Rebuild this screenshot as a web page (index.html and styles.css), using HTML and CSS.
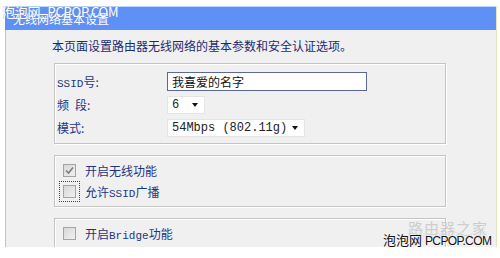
FILE: index.html
```html
<!DOCTYPE html>
<html lang="zh-CN">
<head>
    <meta charset="UTF-8">
    <title>无线网络基本设置</title>
    <link rel="stylesheet" href="styles.css">
</head>
<body>
    <div class="frame">
        <div class="titlebar">无线网络基本设置</div>
        <div class="content">
            <p class="intro">本页面设置路由器无线网络的基本参数和安全认证选项。</p>

            <div class="group">
                <div class="row">
                    <span class="label"><span class="lat">SSID</span>号:</span>
                    <span class="text-input">我喜爱的名字</span>
                </div>
                <div class="row">
                    <span class="label"><span class="spaced">频</span>段:</span>
                    <span class="select short"><span class="val">6</span><span class="arrow"></span></span>
                </div>
                <div class="row">
                    <span class="label">模式:</span>
                    <span class="select long"><span class="val">54Mbps (802.11g)</span><span class="arrow"></span></span>
                </div>
            </div>

            <div class="group checks">
                <div class="check-row">
                    <span class="box checked">
                        <svg width="9" height="9" viewBox="0 0 9 9"><path d="M1 4.5 L3.5 7 L8 1.5" fill="none" stroke="#7d7d7d" stroke-width="1.6"/></svg>
                    </span>
                    <span class="check-text">开启无线功能</span>
                </div>
                <div class="check-row">
                    <span class="focus"><span class="box"></span></span>
                    <span class="check-text">允许<span class="lat">SSID</span>广播</span>
                </div>
            </div>

            <div class="group checks last">
                <div class="check-row">
                    <span class="box"></span>
                    <span class="check-text">开启<span class="lat">Bridge</span>功能</span>
                </div>
            </div>
        </div>
    </div>

    <div class="mark-top">泡泡网_PCPOP.COM</div>
    <div class="mark-site">路由器之家<span class="mark-url">luyouqi520.com</span></div>
    <div class="mark-bottom">泡泡网 <span class="mark-latin">PCPOP.COM</span></div>
</body>
</html>
```

FILE: styles.css
```css
body {
    margin: 0;
    background: #fff;
    font-family: "Noto Sans CJK SC", sans-serif;
    font-size: 12px;
    width: 500px;
    height: 258px;
    overflow: hidden;
    position: relative;
}
.frame {
    margin: 6px 3px 0 5px;
    border-right: 1px solid #e6e6b4;
}
.titlebar {
    height: 23px;
    line-height: 23px;
    border-top: 1px solid #b8d8ff;
    background: #5e90f6;
    color: #fff;
    padding-left: 8px;
    font-size: 12px;
}
.content {
    box-sizing: border-box;
    height: 217px;
    overflow: hidden;
    background: #f0f0f0;
    border-left: 1px solid #dcbf98;
    padding: 8px 50px 0 46px;
}
.intro {
    margin: 0;
    line-height: 16px;
    color: #1e2a70;
}
.lat {
    font-family: "Liberation Mono", monospace;
    font-size: 11px;
}
.group {
    margin: 9px 0 0 2px;
    border: 1px solid #c4c4c4;
    box-shadow: inset 1px 1px 0 #fff, 1px 1px 0 #fff;
    padding: 6px 0 4px 2px;
}
.row {
    display: flex;
    align-items: center;
    height: 23px;
}
.label {
    width: 110px;
    color: #1f3582;
}
.spaced {
    margin-right: 6px;
}
.text-input {
    box-sizing: border-box;
    width: 200px;
    height: 19px;
    line-height: 17px;
    border: 1px solid #5d6898;
    background: #fff;
    padding-left: 4px;
    color: #111;
}
.select {
    box-sizing: border-box;
    display: flex;
    align-items: center;
    height: 18px;
    background: #fff;
    border: 1px solid #e4e4e4;
    padding: 0 6px 0 4px;
    font-family: "Liberation Mono", monospace;
    font-size: 12px;
    color: #222;
}
.select.short {
    width: 38px;
}
.select.long {
    width: 138px;
}
.select .val {
    flex: 1;
}
.arrow {
    width: 0;
    height: 0;
    border-left: 3.5px solid transparent;
    border-right: 3.5px solid transparent;
    border-top: 4px solid #111;
}
.checks {
    margin-top: 11px;
    padding: 4px 0 4px 8px;
}
.checks.last {
    margin-top: 11px;
    height: 40px;
}
.check-row {
    display: flex;
    align-items: center;
    height: 21px;
}
.box {
    box-sizing: border-box;
    width: 13px;
    height: 13px;
    border: 1px solid #a4a4a4;
    background: linear-gradient(135deg, #d8d8d8, #f0f0f0);
    display: flex;
    align-items: center;
    justify-content: center;
}
.focus {
    margin: 0 -4px 0 -4px;
    padding: 3px;
    border: 1px dotted #444;
}
.check-text {
    margin-left: 9px;
    color: #1f3582;
}
.mark-top {
    position: absolute;
    left: 2px;
    top: 2px;
    color: #fff;
    font-size: 13px;
    letter-spacing: -0.2px;
    text-shadow: 0 0 1px #7a8aa8;
}
.mark-site {
    position: absolute;
    left: 408px;
    top: 217px;
    color: #cdcdcd;
    font-family: "Noto Sans CJK SC", serif;
    font-size: 15px;
    letter-spacing: 1px;
}
.mark-url {
    display: block;
    margin-top: -7px;
    font-family: "Liberation Mono", monospace;
    font-size: 10px;
    color: #e2e2e2;
    letter-spacing: -0.4px;
}
.mark-bottom {
    position: absolute;
    left: 383px;
    top: 230px;
    color: #111;
    font-size: 13px;
    text-shadow: 0 0 2px #fff;
}
.mark-latin {
    font-family: "Liberation Sans", sans-serif;
    font-size: 12px;
    letter-spacing: -0.6px;
}
```
